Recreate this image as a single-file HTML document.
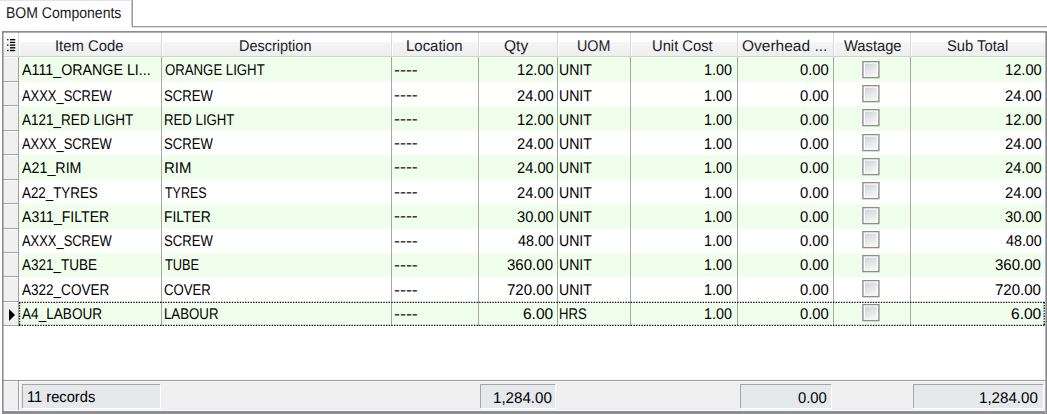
<!DOCTYPE html>
<html><head><meta charset="utf-8">
<style>
html,body{margin:0;padding:0;}
body{width:1047px;height:414px;overflow:hidden;background:#fff;position:relative;font-family:"Liberation Sans",sans-serif;font-size:15.50px;color:#000;}
div{position:absolute;box-sizing:border-box;}
.t{white-space:nowrap;line-height:1;transform-origin:0 0;text-rendering:geometricPrecision;}
</style></head><body>

<div style="left:0;top:0;width:132px;height:1px;background:#e4e4e4"></div>
<div style="left:131px;top:0;width:1px;height:27px;background:#cacace"></div>
<div style="left:132px;top:0;width:1px;height:27px;background:#9c9ca0"></div>
<div style="left:132px;top:26px;width:915px;height:1px;background:#9c9ca0"></div>
<div style="left:132px;top:27px;width:915px;height:1px;background:#dcdce0"></div>
<div style="left:2px;top:31px;width:1045px;height:383px;border:1px solid #8e8e92;background:#fff"></div>
<div style="left:3px;top:32px;width:1043px;height:24px;background:linear-gradient(#ffffff 0,#ffffff 9.5px,#f5f5f6 10px,#eeeeef 24px)"></div>
<div style="left:3px;top:56px;width:1043px;height:1px;background:#d4d4d6"></div>
<div style="left:18px;top:32px;width:1px;height:24px;background:#dadadc"></div>
<div style="left:19px;top:32px;width:1px;height:24px;background:#ffffff"></div>
<div style="left:161px;top:32px;width:1px;height:24px;background:#dadadc"></div>
<div style="left:162px;top:32px;width:1px;height:24px;background:#ffffff"></div>
<div style="left:391px;top:32px;width:1px;height:24px;background:#dadadc"></div>
<div style="left:392px;top:32px;width:1px;height:24px;background:#ffffff"></div>
<div style="left:478px;top:32px;width:1px;height:24px;background:#dadadc"></div>
<div style="left:479px;top:32px;width:1px;height:24px;background:#ffffff"></div>
<div style="left:557px;top:32px;width:1px;height:24px;background:#dadadc"></div>
<div style="left:558px;top:32px;width:1px;height:24px;background:#ffffff"></div>
<div style="left:630px;top:32px;width:1px;height:24px;background:#dadadc"></div>
<div style="left:631px;top:32px;width:1px;height:24px;background:#ffffff"></div>
<div style="left:737px;top:32px;width:1px;height:24px;background:#dadadc"></div>
<div style="left:738px;top:32px;width:1px;height:24px;background:#ffffff"></div>
<div style="left:833px;top:32px;width:1px;height:24px;background:#dadadc"></div>
<div style="left:834px;top:32px;width:1px;height:24px;background:#ffffff"></div>
<div style="left:910px;top:32px;width:1px;height:24px;background:#dadadc"></div>
<div style="left:911px;top:32px;width:1px;height:24px;background:#ffffff"></div>
<svg width="20" height="56" viewBox="0 0 20 56" style="position:absolute;left:0;top:0"><rect x="7.1" y="39.03" width="1.35" height="1.35" fill="#000"/><rect x="10" y="39.03" width="5.2" height="1.35" fill="#000"/><rect x="10" y="41.73" width="5.2" height="1.35" fill="#000"/><rect x="7.1" y="44.43" width="1.35" height="1.35" fill="#000"/><rect x="10" y="44.43" width="5.2" height="1.35" fill="#000"/><rect x="10" y="47.12" width="5.2" height="1.35" fill="#000"/><rect x="7.1" y="49.83" width="1.35" height="1.35" fill="#000"/><rect x="10" y="49.83" width="5.2" height="1.35" fill="#000"/></svg>
<div style="left:19px;top:57.40px;width:1027px;height:24.45px;background:#f0ffec"></div>
<div style="left:3px;top:57.40px;width:15px;height:24.45px;background:#f0f0f0"></div>
<div style="left:3px;top:80.85px;width:15px;height:1px;background:#a4a4a6"></div>
<div style="left:3px;top:57.40px;width:15px;height:1px;background:#fbfbfb"></div>
<svg width="20" height="20" viewBox="0 0 20 20" style="position:absolute;left:861px;top:60.70px"><defs><linearGradient id="g0" x1="0" y1="0" x2="0.5" y2="1"><stop offset="0" stop-color="#cfd3dc"/><stop offset="1" stop-color="#f3f3f3"/></linearGradient></defs><rect x="1.9" y="0.6" width="16" height="16" fill="#fff" stroke="#8e8e8e" stroke-width="1.4"/><rect x="3.9" y="2.6" width="12" height="12.1" fill="url(#g0)"/></svg>
<div style="left:19px;top:81.85px;width:1027px;height:24.45px;background:#ffffff"></div>
<div style="left:3px;top:81.85px;width:15px;height:24.45px;background:#f0f0f0"></div>
<div style="left:3px;top:105.30px;width:15px;height:1px;background:#a4a4a6"></div>
<div style="left:3px;top:81.85px;width:15px;height:1px;background:#fbfbfb"></div>
<svg width="20" height="20" viewBox="0 0 20 20" style="position:absolute;left:861px;top:85.03px"><defs><linearGradient id="g1" x1="0" y1="0" x2="0.5" y2="1"><stop offset="0" stop-color="#cfd3dc"/><stop offset="1" stop-color="#f3f3f3"/></linearGradient></defs><rect x="1.9" y="0.6" width="16" height="16" fill="#fff" stroke="#8e8e8e" stroke-width="1.4"/><rect x="3.9" y="2.6" width="12" height="12.1" fill="url(#g1)"/></svg>
<div style="left:19px;top:106.30px;width:1027px;height:24.45px;background:#f0ffec"></div>
<div style="left:3px;top:106.30px;width:15px;height:24.45px;background:#f0f0f0"></div>
<div style="left:3px;top:129.75px;width:15px;height:1px;background:#a4a4a6"></div>
<div style="left:3px;top:106.30px;width:15px;height:1px;background:#fbfbfb"></div>
<svg width="20" height="20" viewBox="0 0 20 20" style="position:absolute;left:861px;top:109.36px"><defs><linearGradient id="g2" x1="0" y1="0" x2="0.5" y2="1"><stop offset="0" stop-color="#cfd3dc"/><stop offset="1" stop-color="#f3f3f3"/></linearGradient></defs><rect x="1.9" y="0.6" width="16" height="16" fill="#fff" stroke="#8e8e8e" stroke-width="1.4"/><rect x="3.9" y="2.6" width="12" height="12.1" fill="url(#g2)"/></svg>
<div style="left:19px;top:130.75px;width:1027px;height:24.45px;background:#ffffff"></div>
<div style="left:3px;top:130.75px;width:15px;height:24.45px;background:#f0f0f0"></div>
<div style="left:3px;top:154.20px;width:15px;height:1px;background:#a4a4a6"></div>
<div style="left:3px;top:130.75px;width:15px;height:1px;background:#fbfbfb"></div>
<svg width="20" height="20" viewBox="0 0 20 20" style="position:absolute;left:861px;top:133.69px"><defs><linearGradient id="g3" x1="0" y1="0" x2="0.5" y2="1"><stop offset="0" stop-color="#cfd3dc"/><stop offset="1" stop-color="#f3f3f3"/></linearGradient></defs><rect x="1.9" y="0.6" width="16" height="16" fill="#fff" stroke="#8e8e8e" stroke-width="1.4"/><rect x="3.9" y="2.6" width="12" height="12.1" fill="url(#g3)"/></svg>
<div style="left:19px;top:155.20px;width:1027px;height:24.45px;background:#f0ffec"></div>
<div style="left:3px;top:155.20px;width:15px;height:24.45px;background:#f0f0f0"></div>
<div style="left:3px;top:178.65px;width:15px;height:1px;background:#a4a4a6"></div>
<div style="left:3px;top:155.20px;width:15px;height:1px;background:#fbfbfb"></div>
<svg width="20" height="20" viewBox="0 0 20 20" style="position:absolute;left:861px;top:158.02px"><defs><linearGradient id="g4" x1="0" y1="0" x2="0.5" y2="1"><stop offset="0" stop-color="#cfd3dc"/><stop offset="1" stop-color="#f3f3f3"/></linearGradient></defs><rect x="1.9" y="0.6" width="16" height="16" fill="#fff" stroke="#8e8e8e" stroke-width="1.4"/><rect x="3.9" y="2.6" width="12" height="12.1" fill="url(#g4)"/></svg>
<div style="left:19px;top:179.65px;width:1027px;height:24.45px;background:#ffffff"></div>
<div style="left:3px;top:179.65px;width:15px;height:24.45px;background:#f0f0f0"></div>
<div style="left:3px;top:203.10px;width:15px;height:1px;background:#a4a4a6"></div>
<div style="left:3px;top:179.65px;width:15px;height:1px;background:#fbfbfb"></div>
<svg width="20" height="20" viewBox="0 0 20 20" style="position:absolute;left:861px;top:182.35px"><defs><linearGradient id="g5" x1="0" y1="0" x2="0.5" y2="1"><stop offset="0" stop-color="#cfd3dc"/><stop offset="1" stop-color="#f3f3f3"/></linearGradient></defs><rect x="1.9" y="0.6" width="16" height="16" fill="#fff" stroke="#8e8e8e" stroke-width="1.4"/><rect x="3.9" y="2.6" width="12" height="12.1" fill="url(#g5)"/></svg>
<div style="left:19px;top:204.10px;width:1027px;height:24.45px;background:#f0ffec"></div>
<div style="left:3px;top:204.10px;width:15px;height:24.45px;background:#f0f0f0"></div>
<div style="left:3px;top:227.55px;width:15px;height:1px;background:#a4a4a6"></div>
<div style="left:3px;top:204.10px;width:15px;height:1px;background:#fbfbfb"></div>
<svg width="20" height="20" viewBox="0 0 20 20" style="position:absolute;left:861px;top:206.68px"><defs><linearGradient id="g6" x1="0" y1="0" x2="0.5" y2="1"><stop offset="0" stop-color="#cfd3dc"/><stop offset="1" stop-color="#f3f3f3"/></linearGradient></defs><rect x="1.9" y="0.6" width="16" height="16" fill="#fff" stroke="#8e8e8e" stroke-width="1.4"/><rect x="3.9" y="2.6" width="12" height="12.1" fill="url(#g6)"/></svg>
<div style="left:19px;top:228.55px;width:1027px;height:24.45px;background:#ffffff"></div>
<div style="left:3px;top:228.55px;width:15px;height:24.45px;background:#f0f0f0"></div>
<div style="left:3px;top:252.00px;width:15px;height:1px;background:#a4a4a6"></div>
<div style="left:3px;top:228.55px;width:15px;height:1px;background:#fbfbfb"></div>
<svg width="20" height="20" viewBox="0 0 20 20" style="position:absolute;left:861px;top:231.01px"><defs><linearGradient id="g7" x1="0" y1="0" x2="0.5" y2="1"><stop offset="0" stop-color="#cfd3dc"/><stop offset="1" stop-color="#f3f3f3"/></linearGradient></defs><rect x="1.9" y="0.6" width="16" height="16" fill="#fff" stroke="#8e8e8e" stroke-width="1.4"/><rect x="3.9" y="2.6" width="12" height="12.1" fill="url(#g7)"/></svg>
<div style="left:19px;top:253.00px;width:1027px;height:24.45px;background:#f0ffec"></div>
<div style="left:3px;top:253.00px;width:15px;height:24.45px;background:#f0f0f0"></div>
<div style="left:3px;top:276.45px;width:15px;height:1px;background:#a4a4a6"></div>
<div style="left:3px;top:253.00px;width:15px;height:1px;background:#fbfbfb"></div>
<svg width="20" height="20" viewBox="0 0 20 20" style="position:absolute;left:861px;top:255.34px"><defs><linearGradient id="g8" x1="0" y1="0" x2="0.5" y2="1"><stop offset="0" stop-color="#cfd3dc"/><stop offset="1" stop-color="#f3f3f3"/></linearGradient></defs><rect x="1.9" y="0.6" width="16" height="16" fill="#fff" stroke="#8e8e8e" stroke-width="1.4"/><rect x="3.9" y="2.6" width="12" height="12.1" fill="url(#g8)"/></svg>
<div style="left:19px;top:277.45px;width:1027px;height:24.45px;background:#ffffff"></div>
<div style="left:3px;top:277.45px;width:15px;height:24.45px;background:#f0f0f0"></div>
<div style="left:3px;top:300.90px;width:15px;height:1px;background:#a4a4a6"></div>
<div style="left:3px;top:277.45px;width:15px;height:1px;background:#fbfbfb"></div>
<svg width="20" height="20" viewBox="0 0 20 20" style="position:absolute;left:861px;top:279.67px"><defs><linearGradient id="g9" x1="0" y1="0" x2="0.5" y2="1"><stop offset="0" stop-color="#cfd3dc"/><stop offset="1" stop-color="#f3f3f3"/></linearGradient></defs><rect x="1.9" y="0.6" width="16" height="16" fill="#fff" stroke="#8e8e8e" stroke-width="1.4"/><rect x="3.9" y="2.6" width="12" height="12.1" fill="url(#g9)"/></svg>
<div style="left:19px;top:301.90px;width:1027px;height:24.45px;background:#f0ffec"></div>
<div style="left:3px;top:301.90px;width:15px;height:24.45px;background:#f0f0f0"></div>
<div style="left:3px;top:325.35px;width:15px;height:1px;background:#a4a4a6"></div>
<div style="left:3px;top:301.90px;width:15px;height:1px;background:#fbfbfb"></div>
<svg width="20" height="20" viewBox="0 0 20 20" style="position:absolute;left:861px;top:304.00px"><defs><linearGradient id="g10" x1="0" y1="0" x2="0.5" y2="1"><stop offset="0" stop-color="#cfd3dc"/><stop offset="1" stop-color="#f3f3f3"/></linearGradient></defs><rect x="1.9" y="0.6" width="16" height="16" fill="#fff" stroke="#8e8e8e" stroke-width="1.4"/><rect x="3.9" y="2.6" width="12" height="12.1" fill="url(#g10)"/></svg>
<div style="left:161px;top:57px;width:1px;height:269.35px;background:#a6a6a8"></div>
<div style="left:391px;top:57px;width:1px;height:269.35px;background:#a6a6a8"></div>
<div style="left:478px;top:57px;width:1px;height:269.35px;background:#a6a6a8"></div>
<div style="left:557px;top:57px;width:1px;height:269.35px;background:#a6a6a8"></div>
<div style="left:630px;top:57px;width:1px;height:269.35px;background:#a6a6a8"></div>
<div style="left:737px;top:57px;width:1px;height:269.35px;background:#a6a6a8"></div>
<div style="left:833px;top:57px;width:1px;height:269.35px;background:#a6a6a8"></div>
<div style="left:910px;top:57px;width:1px;height:269.35px;background:#a6a6a8"></div>
<div style="left:18px;top:57px;width:1px;height:269.35px;background:#a0a0a2"></div>
<svg width="1047" height="414" style="position:absolute;left:0;top:0"><g stroke="#000" stroke-width="1.3" stroke-dasharray="1.33 1.33" fill="none"><line x1="19" y1="302.3" x2="1044.8" y2="302.3"/><line x1="19" y1="325.4" x2="1044.8" y2="325.4"/><line x1="19.6" y1="302.3" x2="19.6" y2="325.4"/><line x1="1044.2" y1="302.3" x2="1044.2" y2="325.4"/></g></svg>
<svg width="8" height="14" style="position:absolute;left:8px;top:307.9px"><path d="M1 1 L7 7 L1 13 Z" fill="#000"/></svg>
<div style="left:3px;top:380px;width:1043px;height:33px;background:#f0f0f0;border-top:1px solid #9a9a9c"></div>
<div style="left:3px;top:381px;width:1043px;height:1px;background:#fafafa"></div>
<div style="left:18px;top:381px;width:1px;height:32px;background:#a0a0a2"></div>
<div style="left:19px;top:381px;width:1px;height:30px;background:#fbfbfb"></div>
<div style="left:3px;top:410px;width:1043px;height:1px;background:#fafafa"></div>
<div style="left:2px;top:411px;width:1045px;height:3px;background:#8e8e92"></div>
<div style="left:1045px;top:31px;width:1px;height:383px;background:#b4b4b8"></div>
<div style="left:1046px;top:31px;width:1px;height:383px;background:#88888c"></div>
<div style="left:22.3px;top:384px;width:137.7px;height:24px;background:#e6e9eb;border-top:1px solid #a6a6a8;border-left:1px solid #a6a6a8;box-shadow:1px 1px 0 #fff"></div>
<div style="left:480.3px;top:384px;width:75.2px;height:24px;background:#e6e9eb;border-top:1px solid #a6a6a8;border-left:1px solid #a6a6a8;box-shadow:1px 1px 0 #fff"></div>
<div style="left:739.5px;top:384px;width:91.5px;height:24px;background:#e6e9eb;border-top:1px solid #a6a6a8;border-left:1px solid #a6a6a8;box-shadow:1px 1px 0 #fff"></div>
<div style="left:912.5px;top:384px;width:130.5px;height:24px;background:#e6e9eb;border-top:1px solid #a6a6a8;border-left:1px solid #a6a6a8;box-shadow:1px 1px 0 #fff"></div>
<div style="left:2px;top:32px;width:1044px;height:1px;background:rgba(110,110,118,0.55)"></div>
<div style="left:3px;top:32px;width:1px;height:381px;background:rgba(110,110,118,0.45)"></div>
<div class="t" style="left:6.04px;top:5.80px;transform:scale(0.9048,1.000);color:#1a1a24">BOM Components</div>
<div class="t" style="left:55.28px;top:39.20px;transform:scale(0.9567,1.000);color:#1c1c28">Item Code</div>
<div class="t" style="left:239.00px;top:39.20px;transform:scale(0.9342,1.000);color:#1c1c28">Description</div>
<div class="t" style="left:406.04px;top:39.20px;transform:scale(0.9649,1.000);color:#1c1c28">Location</div>
<div class="t" style="left:504.00px;top:39.20px;transform:scale(1.0009,1.000);color:#1c1c28">Qty</div>
<div class="t" style="left:577.04px;top:39.20px;transform:scale(0.9239,1.000);color:#1c1c28">UOM</div>
<div class="t" style="left:652.28px;top:39.20px;transform:scale(0.9519,1.000);color:#1c1c28">Unit Cost</div>
<div class="t" style="left:742.00px;top:39.20px;transform:scale(1.0000,1.000);color:#1c1c28">Overhead ...</div>
<div class="t" style="left:843.80px;top:39.20px;transform:scale(0.9500,1.000);color:#1c1c28">Wastage</div>
<div class="t" style="left:946.52px;top:39.20px;transform:scale(0.9524,1.000);color:#1c1c28">Sub Total</div>
<div class="t" style="left:22.04px;top:63.40px;transform:scale(0.9203,1.000);color:#000">A111_ORANGE LI...</div>
<div class="t" style="left:164.52px;top:63.40px;transform:scale(0.8513,1.000);color:#000">ORANGE LIGHT</div>
<div class="t" style="left:393.72px;top:62.80px;transform:scale(1.1524,1.000);color:#000">----</div>
<div class="t" style="left:517.20px;top:63.40px;transform:scale(0.9481,1.000);color:#000">12.00</div>
<div class="t" style="left:558.96px;top:63.40px;transform:scale(0.9089,1.000);color:#000">UNIT</div>
<div class="t" style="left:703.90px;top:63.40px;transform:scale(0.9246,1.000);color:#000">1.00</div>
<div class="t" style="left:800.48px;top:63.40px;transform:scale(0.9538,1.000);color:#000">0.00</div>
<div class="t" style="left:1004.92px;top:63.40px;transform:scale(0.9459,1.000);color:#000">12.00</div>
<div class="t" style="left:22.04px;top:88.50px;transform:scale(0.8337,1.000);color:#000">AXXX_SCREW</div>
<div class="t" style="left:163.72px;top:88.50px;transform:scale(0.8457,1.000);color:#000">SCREW</div>
<div class="t" style="left:393.72px;top:87.90px;transform:scale(1.1524,1.000);color:#000">----</div>
<div class="t" style="left:517.20px;top:88.50px;transform:scale(0.9481,1.000);color:#000">24.00</div>
<div class="t" style="left:558.96px;top:88.50px;transform:scale(0.9089,1.000);color:#000">UNIT</div>
<div class="t" style="left:703.90px;top:88.50px;transform:scale(0.9246,1.000);color:#000">1.00</div>
<div class="t" style="left:800.48px;top:88.50px;transform:scale(0.9538,1.000);color:#000">0.00</div>
<div class="t" style="left:1004.92px;top:88.50px;transform:scale(0.9481,1.000);color:#000">24.00</div>
<div class="t" style="left:22.04px;top:112.60px;transform:scale(0.8725,1.000);color:#000">A121_RED LIGHT</div>
<div class="t" style="left:163.52px;top:112.60px;transform:scale(0.8519,1.000);color:#000">RED LIGHT</div>
<div class="t" style="left:393.72px;top:112.00px;transform:scale(1.1524,1.000);color:#000">----</div>
<div class="t" style="left:517.20px;top:112.60px;transform:scale(0.9481,1.000);color:#000">12.00</div>
<div class="t" style="left:558.96px;top:112.60px;transform:scale(0.9089,1.000);color:#000">UNIT</div>
<div class="t" style="left:703.90px;top:112.60px;transform:scale(0.9246,1.000);color:#000">1.00</div>
<div class="t" style="left:800.48px;top:112.60px;transform:scale(0.9538,1.000);color:#000">0.00</div>
<div class="t" style="left:1004.92px;top:112.60px;transform:scale(0.9459,1.000);color:#000">12.00</div>
<div class="t" style="left:22.04px;top:136.70px;transform:scale(0.8337,1.000);color:#000">AXXX_SCREW</div>
<div class="t" style="left:163.72px;top:136.70px;transform:scale(0.8457,1.000);color:#000">SCREW</div>
<div class="t" style="left:393.72px;top:136.10px;transform:scale(1.1524,1.000);color:#000">----</div>
<div class="t" style="left:517.20px;top:136.70px;transform:scale(0.9481,1.000);color:#000">24.00</div>
<div class="t" style="left:558.96px;top:136.70px;transform:scale(0.9089,1.000);color:#000">UNIT</div>
<div class="t" style="left:703.90px;top:136.70px;transform:scale(0.9246,1.000);color:#000">1.00</div>
<div class="t" style="left:800.48px;top:136.70px;transform:scale(0.9538,1.000);color:#000">0.00</div>
<div class="t" style="left:1004.92px;top:136.70px;transform:scale(0.9481,1.000);color:#000">24.00</div>
<div class="t" style="left:22.04px;top:160.80px;transform:scale(0.9208,1.000);color:#000">A21_RIM</div>
<div class="t" style="left:163.52px;top:160.80px;transform:scale(0.9615,1.000);color:#000">RIM</div>
<div class="t" style="left:393.72px;top:160.20px;transform:scale(1.1524,1.000);color:#000">----</div>
<div class="t" style="left:517.20px;top:160.80px;transform:scale(0.9481,1.000);color:#000">24.00</div>
<div class="t" style="left:558.96px;top:160.80px;transform:scale(0.9089,1.000);color:#000">UNIT</div>
<div class="t" style="left:703.90px;top:160.80px;transform:scale(0.9246,1.000);color:#000">1.00</div>
<div class="t" style="left:800.48px;top:160.80px;transform:scale(0.9538,1.000);color:#000">0.00</div>
<div class="t" style="left:1004.92px;top:160.80px;transform:scale(0.9481,1.000);color:#000">24.00</div>
<div class="t" style="left:22.04px;top:185.90px;transform:scale(0.8621,1.000);color:#000">A22_TYRES</div>
<div class="t" style="left:164.52px;top:185.90px;transform:scale(0.8042,1.000);color:#000">TYRES</div>
<div class="t" style="left:393.72px;top:185.30px;transform:scale(1.1524,1.000);color:#000">----</div>
<div class="t" style="left:517.20px;top:185.90px;transform:scale(0.9481,1.000);color:#000">24.00</div>
<div class="t" style="left:558.96px;top:185.90px;transform:scale(0.9089,1.000);color:#000">UNIT</div>
<div class="t" style="left:703.90px;top:185.90px;transform:scale(0.9246,1.000);color:#000">1.00</div>
<div class="t" style="left:800.48px;top:185.90px;transform:scale(0.9538,1.000);color:#000">0.00</div>
<div class="t" style="left:1004.92px;top:185.90px;transform:scale(0.9481,1.000);color:#000">24.00</div>
<div class="t" style="left:22.04px;top:210.00px;transform:scale(0.9095,1.000);color:#000">A311_FILTER</div>
<div class="t" style="left:163.52px;top:210.00px;transform:scale(0.8962,1.000);color:#000">FILTER</div>
<div class="t" style="left:393.72px;top:209.40px;transform:scale(1.1524,1.000);color:#000">----</div>
<div class="t" style="left:517.20px;top:210.00px;transform:scale(0.9481,1.000);color:#000">30.00</div>
<div class="t" style="left:558.96px;top:210.00px;transform:scale(0.9089,1.000);color:#000">UNIT</div>
<div class="t" style="left:703.90px;top:210.00px;transform:scale(0.9246,1.000);color:#000">1.00</div>
<div class="t" style="left:800.48px;top:210.00px;transform:scale(0.9538,1.000);color:#000">0.00</div>
<div class="t" style="left:1004.92px;top:210.00px;transform:scale(0.9481,1.000);color:#000">30.00</div>
<div class="t" style="left:22.04px;top:234.10px;transform:scale(0.8337,1.000);color:#000">AXXX_SCREW</div>
<div class="t" style="left:163.72px;top:234.10px;transform:scale(0.8457,1.000);color:#000">SCREW</div>
<div class="t" style="left:393.72px;top:233.50px;transform:scale(1.1524,1.000);color:#000">----</div>
<div class="t" style="left:518.00px;top:234.10px;transform:scale(0.9238,1.000);color:#000">48.00</div>
<div class="t" style="left:558.96px;top:234.10px;transform:scale(0.9089,1.000);color:#000">UNIT</div>
<div class="t" style="left:703.90px;top:234.10px;transform:scale(0.9246,1.000);color:#000">1.00</div>
<div class="t" style="left:800.48px;top:234.10px;transform:scale(0.9538,1.000);color:#000">0.00</div>
<div class="t" style="left:1005.72px;top:234.10px;transform:scale(0.9211,1.000);color:#000">48.00</div>
<div class="t" style="left:22.04px;top:258.20px;transform:scale(0.8707,1.000);color:#000">A321_TUBE</div>
<div class="t" style="left:164.52px;top:258.20px;transform:scale(0.8254,1.000);color:#000">TUBE</div>
<div class="t" style="left:393.72px;top:257.60px;transform:scale(1.1524,1.000);color:#000">----</div>
<div class="t" style="left:507.20px;top:258.20px;transform:scale(0.9707,1.000);color:#000">360.00</div>
<div class="t" style="left:558.96px;top:258.20px;transform:scale(0.9089,1.000);color:#000">UNIT</div>
<div class="t" style="left:703.90px;top:258.20px;transform:scale(0.9246,1.000);color:#000">1.00</div>
<div class="t" style="left:800.48px;top:258.20px;transform:scale(0.9538,1.000);color:#000">0.00</div>
<div class="t" style="left:994.92px;top:258.20px;transform:scale(0.9697,1.000);color:#000">360.00</div>
<div class="t" style="left:22.04px;top:283.30px;transform:scale(0.8728,1.000);color:#000">A322_COVER</div>
<div class="t" style="left:163.72px;top:283.30px;transform:scale(0.8486,1.000);color:#000">COVER</div>
<div class="t" style="left:393.72px;top:282.70px;transform:scale(1.1524,1.000);color:#000">----</div>
<div class="t" style="left:507.20px;top:283.30px;transform:scale(0.9707,1.000);color:#000">720.00</div>
<div class="t" style="left:558.96px;top:283.30px;transform:scale(0.9089,1.000);color:#000">UNIT</div>
<div class="t" style="left:703.90px;top:283.30px;transform:scale(0.9246,1.000);color:#000">1.00</div>
<div class="t" style="left:800.48px;top:283.30px;transform:scale(0.9538,1.000);color:#000">0.00</div>
<div class="t" style="left:994.92px;top:283.30px;transform:scale(0.9697,1.000);color:#000">720.00</div>
<div class="t" style="left:22.04px;top:307.40px;transform:scale(0.8778,1.000);color:#000">A4_LABOUR</div>
<div class="t" style="left:163.52px;top:307.40px;transform:scale(0.8548,1.000);color:#000">LABOUR</div>
<div class="t" style="left:393.72px;top:306.80px;transform:scale(1.1524,1.000);color:#000">----</div>
<div class="t" style="left:523.00px;top:307.40px;transform:scale(1.0000,1.000);color:#000">6.00</div>
<div class="t" style="left:558.96px;top:307.40px;transform:scale(0.8444,1.000);color:#000">HRS</div>
<div class="t" style="left:703.90px;top:307.40px;transform:scale(0.9246,1.000);color:#000">1.00</div>
<div class="t" style="left:800.48px;top:307.40px;transform:scale(0.9538,1.000);color:#000">0.00</div>
<div class="t" style="left:1010.52px;top:307.40px;transform:scale(1.0012,1.000);color:#000">6.00</div>
<div class="t" style="left:26.52px;top:389.80px;transform:scale(0.9466,1.000);color:#000">11 records</div>
<div class="t" style="left:493.16px;top:391.00px;transform:scale(0.9761,1.000);color:#000">1,284.00</div>
<div class="t" style="left:798.48px;top:391.00px;transform:scale(0.9538,1.000);color:#000">0.00</div>
<div class="t" style="left:978.64px;top:391.00px;transform:scale(0.9764,1.000);color:#000">1,284.00</div>
</body></html>
